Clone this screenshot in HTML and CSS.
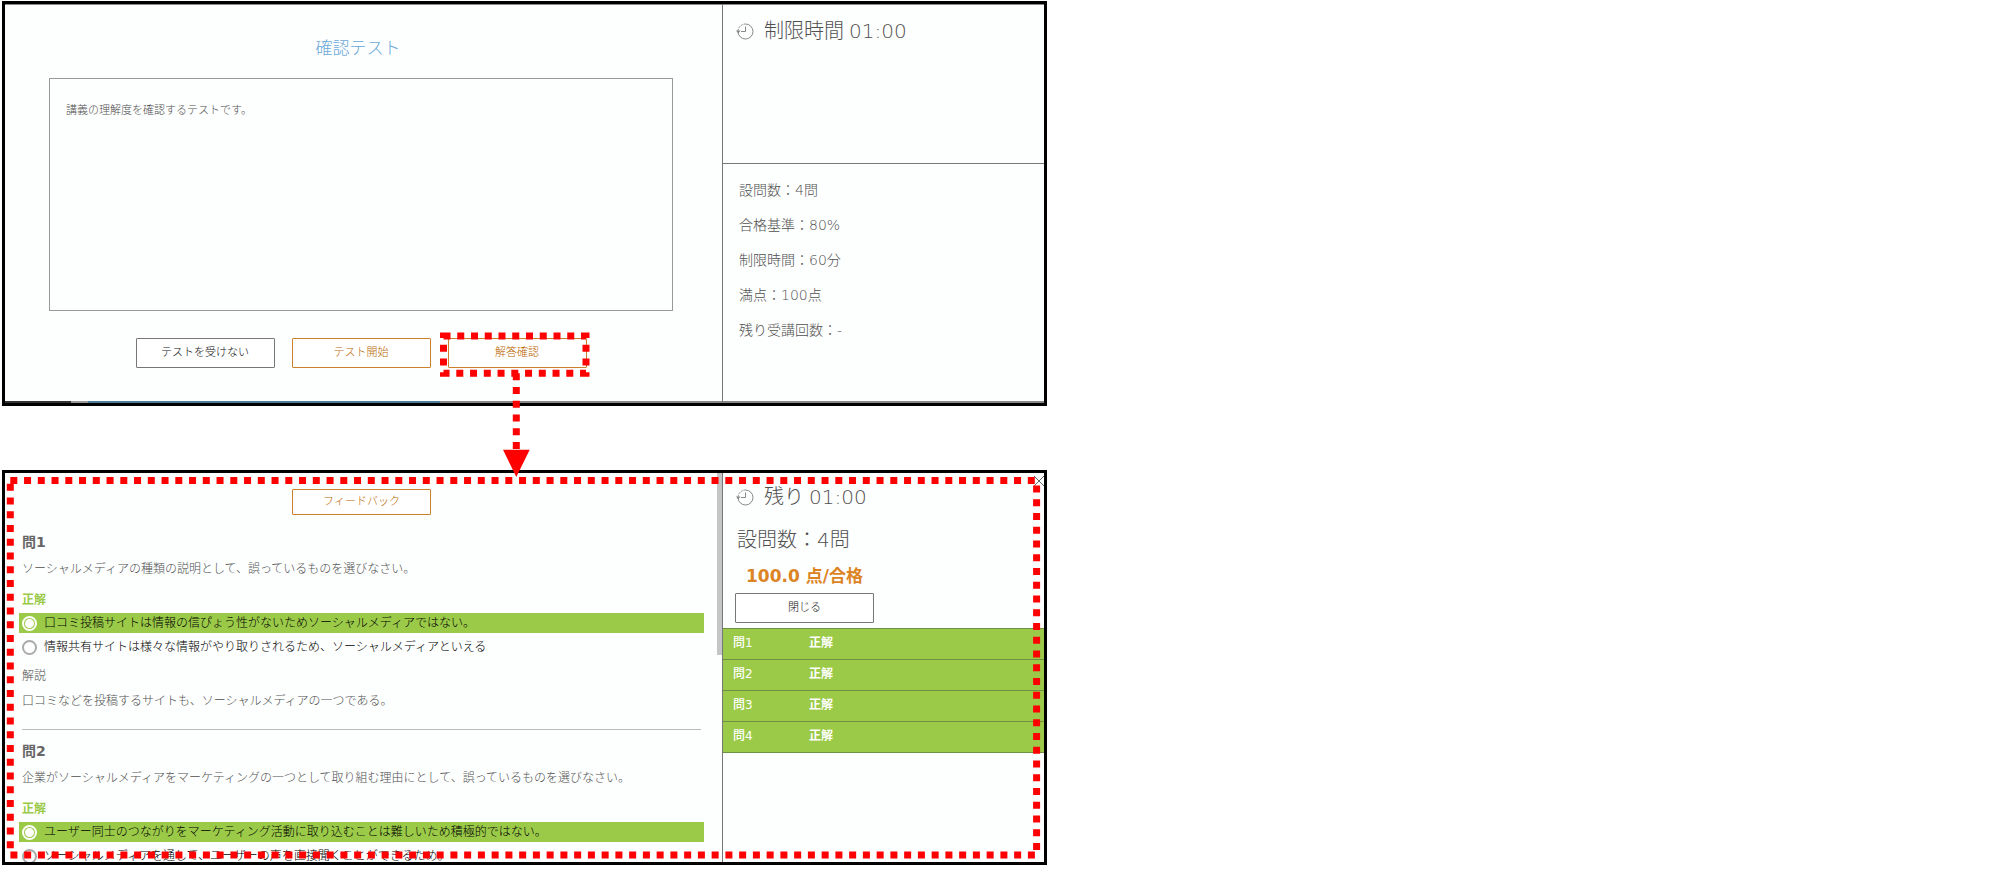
FILE: index.html
```
<!DOCTYPE html>
<html lang="ja">
<head>
  <meta charset="UTF-8">
  <title>確認テスト</title>
  <link rel="stylesheet" href="styles.css">
</head>
<body>

  <main class="manual">

    <!-- テスト開始画面 -->
    <section class="panel panel-start">
      <div class="start-main">
        <h1>確認テスト</h1>
        <div class="description">講義の理解度を確認するテストです。</div>
        <div class="buttons">
          <button type="button" class="btn">テストを受けない</button>
          <button type="button" class="btn btn-orange">テスト開始</button>
          <button type="button" class="btn btn-orange">解答確認</button>
        </div>
      </div>
      <aside class="side">
        <div class="side-time">
          <div class="timer">
            <svg class="clock" viewBox="0 0 17 17">
              <path d="M1 9a7.500 7.500 0 1 0 7.500-8"/>
              <path d="M8.500 1a7.500 7.500 0 0 0-7.500 7.500" stroke-dasharray="2 1"/>
              <path d="M8.500 3.500v5h-4.500"/>
              <path class="tip" d="M-1 7.500h4.500l-2.200 3z"/>
            </svg>
            <span>制限時間</span>
            <span class="time">01:00</span>
          </div>
        </div>
        <ul class="info">
          <li>設問数：4問</li>
          <li>合格基準：80%</li>
          <li>制限時間：60分</li>
          <li>満点：100点</li>
          <li>残り受講回数：-</li>
        </ul>
      </aside>
    </section>

    <!-- 解答確認画面 -->
    <section class="panel panel-review">
      <div class="review-main">
        <div class="feedback">
          <button type="button" class="btn btn-orange btn-low">フィードバック</button>
        </div>

        <div class="question">
          <h2>問1</h2>
          <p class="text">ソーシャルメディアの種類の説明として、誤っているものを選びなさい。</p>
          <p class="result">正解</p>
          <label class="option correct"><input type="radio" name="q1" checked>口コミ投稿サイトは情報の信ぴょう性がないためソーシャルメディアではない。</label>
          <label class="option"><input type="radio" name="q1">情報共有サイトは様々な情報がやり取りされるため、ソーシャルメディアといえる</label>
          <p class="note-title">解説</p>
          <p class="note">口コミなどを投稿するサイトも、ソーシャルメディアの一つである。</p>
        </div>

        <div class="question">
          <h2>問2</h2>
          <p class="text">企業がソーシャルメディアをマーケティングの一つとして取り組む理由にとして、誤っているものを選びなさい。</p>
          <p class="result">正解</p>
          <label class="option correct"><input type="radio" name="q2" checked>ユーザー同士のつながりをマーケティング活動に取り込むことは難しいため積極的ではない。</label>
          <label class="option"><input type="radio" name="q2">ソーシャルメディアを通して、ユーザーの声を直接聞くことができるため。</label>
        </div>
      </div>
      <aside class="side side-review">
        <button type="button" class="close" aria-label="閉じる">
          <svg viewBox="0 0 10 10"><path d="M0 0l10 10M10 0L0 10"/></svg>
        </button>
        <div class="timer">
          <svg class="clock" viewBox="0 0 17 17">
            <path d="M1 9a7.500 7.500 0 1 0 7.500-8"/>
            <path d="M8.500 1a7.500 7.500 0 0 0-7.500 7.500" stroke-dasharray="2 1"/>
            <path d="M8.500 3.500v5h-4.500"/>
            <path class="tip" d="M-1 7.500h4.500l-2.200 3z"/>
          </svg>
          <span>残り</span>
          <span class="time">01:00</span>
        </div>
        <p class="count">設問数：4問</p>
        <p class="score">100.0 点/合格</p>
        <button type="button" class="btn btn-close">閉じる</button>
        <table class="results">
          <tr><td>問1</td><th>正解</th></tr>
          <tr><td>問2</td><th>正解</th></tr>
          <tr><td>問3</td><th>正解</th></tr>
          <tr><td>問4</td><th>正解</th></tr>
        </table>
      </aside>
    </section>

    <!-- 赤い点線と矢印 -->
    <svg class="marks" width="1050" height="870">
      <rect x="443.500" y="336" width="142.500" height="37.300"/>
      <path d="M516.300 373.300V450"/>
      <polygon points="503,449.700 529.700,449.700 516.300,477"/>
      <rect x="10.300" y="480.500" width="1026.300" height="374.500"/>
    </svg>

  </main>

</body>
</html>
```

FILE: styles.css
```
* {
  box-sizing: border-box;
}
body {
  margin: 0;
  background: #fff;
  color: #505050;
  font-family: "DejaVu Sans", "Noto Sans CJK JP", sans-serif;
  font-size: 12px;
  font-weight: 300;
  line-height: 20px;
}
h1, h2, p, ul {
  margin: 0;
  padding: 0;
}
.manual {
  position: relative;
  max-width: 1047px;
  padding: 1px 0 0 2px;
}
.panel {
  display: grid;
  grid-template-columns: 1fr 322px;
  border: 3px solid #000;
  background: #fdfefe;
}
.side {
  border-left: 1px solid #777;
}

/* buttons */
.btn {
  width: 139px;
  height: 30px;
  padding: 0 0 4px;
  border: 1px solid #777;
  border-radius: 1px;
  background: #fff;
  color: #111;
  font-family: inherit;
  font-size: 11px;
  font-weight: 300;
}
.btn-orange {
  border-color: #cc8029;
  color: #b96500;
}
.btn-low {
  height: 26px;
}

/* start screen */
.panel-start {
  min-height: 405px;
  background: linear-gradient(to right, #333 66px, #999 66px, #999 83px, #4b7f96 83px, #4b7f96 435px, #888 435px) bottom / 100% 2px no-repeat #fdfefe;
  box-shadow: inset 0 1px #888;
}
.start-main {
  padding: 32px 49px 0 44px;
}
h1 {
  padding-right: 6px;
  color: #6aa9d8;
  font-size: 17px;
  font-weight: 300;
  line-height: 24px;
  text-align: center;
}
.description {
  min-height: 233px;
  margin-top: 18px;
  padding: 22px 16px;
  border: 1px solid #999;
  font-size: 11px;
}
.buttons {
  display: flex;
  justify-content: center;
  gap: 17px;
  margin-top: 27px;
}
.side-time {
  height: 160px;
  padding: 12px 14px;
  border-bottom: 1px solid #777;
}
.timer {
  display: flex;
  align-items: center;
  font-size: 20px;
  line-height: 30px;
}
.clock {
  width: 17px;
  height: 17px;
  margin-right: 10px;
  overflow: visible;
  fill: none;
  stroke: #888;
}
.clock .tip {
  fill: #888;
  stroke: none;
}
.time {
  margin-left: 5px;
}
.info {
  padding: 9px 16px;
  list-style: none;
  font-size: 14px;
  line-height: 35px;
}

/* review screen */
.panel-review {
  height: 395px;
  margin-top: 64px;
  overflow: hidden;
}
.review-main {
  position: relative;
  padding: 16px 18px 0 14px;
}
/* scroll bar thumb */
.review-main::after {
  content: "";
  position: absolute;
  top: 0;
  right: 0;
  width: 5px;
  height: 182px;
  background: #c4c5c7;
}
.feedback {
  margin-bottom: 17px;
  text-align: center;
  line-height: 0;
}
.question {
  margin: 0 3px;
}
.question + .question {
  margin-top: 18px;
  padding-top: 11px;
  border-top: 1px solid #bbb;
}
h2 {
  color: #666;
  font-size: 14px;
  line-height: 20px;
}
.text {
  margin-top: 7px;
}
.result {
  margin: 11px 0 3px;
  color: #9aca48;
  font-weight: bold;
}
.option {
  display: flex;
  align-items: center;
  gap: 7px;
  height: 20px;
  margin: 0 -3px 4px;
  padding-left: 3px;
  color: #000;
  white-space: nowrap;
}
.option input {
  appearance: none;
  width: 15px;
  height: 15px;
  margin: 0;
  border: 2px solid #aaa;
  border-radius: 50%;
  background: #fff;
}
.correct {
  background: #9bca49;
}
.correct input {
  border: 2px solid #fff;
  background: radial-gradient(#fff 4px, #9bca49 5px);
}
.note-title {
  margin-top: 9px;
}
.note {
  margin-top: 5px;
}
.side-review {
  position: relative;
  padding-top: 9px;
}
.side-review .timer,
.count {
  padding-left: 14px;
}
.count {
  margin-top: 13px;
  font-size: 20px;
  line-height: 30px;
}
.score {
  margin-top: 9px;
  padding-left: 23px;
  color: #dc8424;
  font-size: 17px;
  font-weight: bold;
  line-height: 24px;
}
.btn-close {
  display: block;
  margin: 5px 12px;
}
.close {
  position: absolute;
  top: 3px;
  right: 0;
  width: 10px;
  height: 10px;
  padding: 0;
  border: 0;
  background: none;
}
.close svg {
  display: block;
  stroke: #666;
}
.results {
  width: 100%;
  border-spacing: 0;
  border-bottom: 1px solid #6f8f45;
  background: #9bca49;
  color: #fff;
}
.results td,
.results th {
  height: 31px;
  padding: 0 0 2px;
  border-top: 1px solid #6f8f45;
  font-weight: 500;
  text-align: left;
}
.results th {
  font-weight: bold;
}
.results td {
  width: 86px;
  padding-left: 10px;
}

/* red marks over the screens */
.marks {
  position: absolute;
  top: 0;
  left: 0;
  pointer-events: none;
}
.marks rect,
.marks path {
  fill: none;
  stroke: #f00;
  stroke-width: 7;
  stroke-dasharray: 7 6.75;
}
.marks polygon {
  fill: #f00;
}
```
